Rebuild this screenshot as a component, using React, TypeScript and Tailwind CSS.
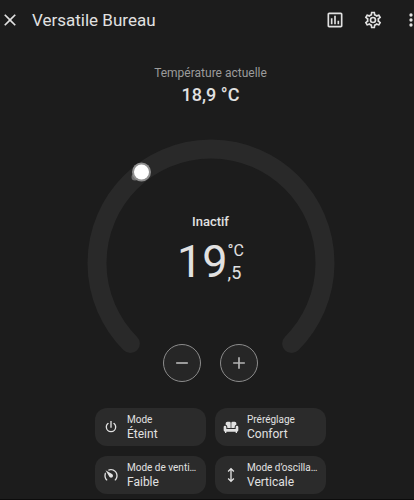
import type { ReactNode } from 'react';

const icons = {
  close: 'M19,6.41L17.59,5L12,10.59L6.41,5L5,6.41L10.59,12L5,17.59L6.41,19L12,13.41L17.59,19L19,17.59L13.41,12L19,6.41Z',
  chart: 'M9 17H7V10H9V17M13 17H11V7H13V17M17 17H15V13H17V17M19 19H5V5H19V19.1M19 3H5C3.9 3 3 3.9 3 5V19C3 20.1 3.9 21 5 21H19C20.1 21 21 20.1 21 19V5C21 3.9 20.1 3 19 3Z',
  cog: 'M12,8A4,4 0 0,1 16,12A4,4 0 0,1 12,16A4,4 0 0,1 8,12A4,4 0 0,1 12,8M12,10A2,2 0 0,0 10,12A2,2 0 0,0 12,14A2,2 0 0,0 14,12A2,2 0 0,0 12,10M10,22C9.75,22 9.54,21.82 9.5,21.58L9.13,18.93C8.5,18.68 7.96,18.34 7.44,17.94L4.95,18.95C4.73,19.03 4.46,18.95 4.34,18.73L2.34,15.27C2.21,15.05 2.27,14.78 2.46,14.63L4.57,12.97L4.5,12L4.57,11L2.46,9.37C2.27,9.22 2.21,8.95 2.34,8.73L4.34,5.27C4.46,5.05 4.73,4.96 4.95,5.05L7.44,6.05C7.96,5.66 8.5,5.32 9.13,5.07L9.5,2.42C9.54,2.18 9.75,2 10,2H14C14.25,2 14.46,2.18 14.5,2.42L14.87,5.07C15.5,5.32 16.04,5.66 16.56,6.05L19.05,5.05C19.27,4.96 19.54,5.05 19.66,5.27L21.66,8.73C21.79,8.95 21.73,9.22 21.54,9.37L19.43,11L19.5,12L19.43,13L21.54,14.63C21.73,14.78 21.79,15.05 21.66,15.27L19.66,18.73C19.54,18.95 19.27,19.04 19.05,18.95L16.56,17.95C16.04,18.34 15.5,18.68 14.87,18.93L14.5,21.58C14.46,21.82 14.25,22 14,22H10M11.25,4L10.88,6.61C9.68,6.86 8.62,7.5 7.85,8.39L5.44,7.35L4.69,8.65L6.8,10.2C6.4,11.37 6.4,12.64 6.8,13.8L4.68,15.36L5.43,16.66L7.86,15.62C8.63,16.5 9.68,17.14 10.87,17.38L11.24,20H12.76L13.13,17.39C14.32,17.14 15.37,16.5 16.14,15.62L18.57,16.66L19.32,15.36L17.2,13.81C17.6,12.64 17.6,11.37 17.2,10.2L19.31,8.65L18.56,7.35L16.15,8.39C15.38,7.5 14.32,6.86 13.12,6.62L12.75,4H11.25Z',
  dots: 'M12,16A2,2 0 0,1 14,18A2,2 0 0,1 12,20A2,2 0 0,1 10,18A2,2 0 0,1 12,16M12,10A2,2 0 0,1 14,12A2,2 0 0,1 12,14A2,2 0 0,1 10,12A2,2 0 0,1 12,10M12,4A2,2 0 0,1 14,6A2,2 0 0,1 12,8A2,2 0 0,1 10,6A2,2 0 0,1 12,4Z',
  minus: 'M19,13H5V11H19V13Z',
  plus: 'M19,13H13V19H11V13H5V11H11V5H13V11H19V13Z',
  power: 'M16.56,5.44L15.11,6.89C16.84,7.94 18,9.83 18,12A6,6 0 0,1 12,18A6,6 0 0,1 6,12C6,9.83 7.16,7.94 8.88,6.88L7.44,5.44C5.36,6.88 4,9.28 4,12A8,8 0 0,0 12,20A8,8 0 0,0 20,12C20,9.28 18.64,6.88 16.56,5.44M13,3H11V13H13',
  sofa: 'M6.5,4H9.5A2,2 0 0,1 11.5,6V13.5H6.5V12A3.5,3.5 0 0,0 4,8.7V6.5A2.5,2.5 0 0,1 6.5,4M14.5,4H17.5A2.5,2.5 0 0,1 20,6.5V8.7A3.5,3.5 0 0,0 17.5,12V13.5H12.5V6A2,2 0 0,1 14.5,4M3,10A2,2 0 0,1 5,12V15H19V12A2,2 0 0,1 23,12V17A2,2 0 0,1 21,19V21H19V19H5V21H3V19A2,2 0 0,1 1,17V12A2,2 0 0,1 3,10Z',
  speed: 'M12 16C13.66 16 15 14.66 15 13C15 11.88 14.39 10.9 13.5 10.39L3.79 4.77L9.32 14.35C9.82 15.33 10.83 16 12 16M12 3C10.19 3 8.5 3.5 7.03 4.32L9.13 5.53C10 5.19 11 5 12 5C16.42 5 20 8.58 20 13C20 15.21 19.11 17.21 17.66 18.65H17.65C17.26 19.04 17.26 19.67 17.65 20.06C18.04 20.45 18.68 20.45 19.07 20.07C20.88 18.26 22 15.76 22 13C22 7.5 17.5 3 12 3M2 13C2 15.76 3.12 18.26 4.93 20.07C5.32 20.45 5.95 20.45 6.34 20.06C6.73 19.67 6.73 19.04 6.34 18.65C4.89 17.2 4 15.21 4 13C4 12 4.19 11 4.54 10.1L3.33 8C2.5 9.5 2 11.18 2 13Z',
  vertical: 'M12,1L17,6L15.6,7.4L13,4.8V19.2L15.6,16.6L17,18L12,23L7,18L8.4,16.6L11,19.2V4.8L8.4,7.4L7,6Z'
};

type IconName = keyof typeof icons;

const modes: { icon: IconName; label: string; value: string }[] = [
  { icon: 'power', label: 'Mode', value: 'Éteint' },
  { icon: 'sofa', label: 'Préréglage', value: 'Confort' },
  { icon: 'speed', label: 'Mode de venti…', value: 'Faible' },
  { icon: 'vertical', label: 'Mode d’oscilla…', value: 'Verticale' }
];

function Icon({ name, className }: { name: IconName; className: string }) {
  return (
    <svg viewBox="0 0 24 24" fill="currentColor" className={className} aria-hidden="true">
      <path d={icons[name]} />
    </svg>
  );
}

function IconButton({ name, label }: { name: IconName; label: string }) {
  return (
    <button type="button" aria-label={label} className="flex size-[38px] items-center justify-center">
      <Icon name={name} className="size-5" />
    </button>
  );
}

function StepButton({ name, label }: { name: IconName; label: string }) {
  return (
    <button
      type="button"
      aria-label={label}
      className="flex size-[38px] items-center justify-center rounded-full border border-[#8c8c8c] bg-[#262626] text-[#b4b4b4]"
    >
      <Icon name={name} className="size-5" />
    </button>
  );
}

function Dial({ children }: { children: ReactNode }) {
  return (
    <div className="relative mt-[33px] h-[243px] w-[248px]">
      <svg viewBox="0 0 248 243" className="absolute inset-0 size-full" aria-hidden="true">
        <path d="M43.4 204.6A114 114 0 1 1 204.6 204.6" fill="none" stroke="#292929" strokeWidth="19" strokeLinecap="round" />
        <circle cx="48" cy="38" r="3.5" fill="#6f6f6f" />
        <circle cx="54.5" cy="33" r="9.5" fill="#8f8f8f" />
        <circle cx="54.5" cy="33" r="7.5" fill="#fff" />
      </svg>
      <div className="relative flex h-full flex-col items-center justify-between pt-[73px]">{children}</div>
    </div>
  );
}

export default function App() {
  return (
    <div className="min-h-screen overflow-hidden border-b border-[#0c0c0c] bg-[#1c1c1c] font-[Roboto,sans-serif] text-[#e1e1e1]">
      <div className="-mr-[7px]">
        <header className="-mr-[9px] flex h-10 items-center">
          <button type="button" aria-label="Fermer" className="flex h-[38px] w-5 items-center justify-center">
            <Icon name="close" className="size-5" />
          </button>
          <h1 className="ml-3 flex-1 text-[17px] leading-6">Versatile Bureau</h1>
          <IconButton name="chart" label="Historique" />
          <IconButton name="cog" label="Paramètres" />
          <IconButton name="dots" label="Plus" />
        </header>

        <main className="flex flex-col items-center pt-[25px] pb-1">
          <p className="text-xs leading-4 text-[#9b9b9b]">Température actuelle</p>
          <p className="mt-[3px] text-lg leading-[22px] font-medium">18,9 °C</p>

          <Dial>
            <div className="flex flex-col items-center">
              <p className="text-[13px] leading-5 font-medium">Inactif</p>
              <div className="mt-[6px] flex items-center">
                <span className="text-[45px] leading-[48px]">19</span>
                <span className="flex flex-col text-base leading-[22px]">
                  <span>°C</span>
                  <span className="text-lg leading-[22px]">,5</span>
                </span>
              </div>
            </div>
            <div className="flex gap-[19px]">
              <StepButton name="minus" label="Diminuer" />
              <StepButton name="plus" label="Augmenter" />
            </div>
          </Dial>

          <div className="mt-[26px] grid grid-cols-2 gap-x-[9px] gap-y-[10px]">
            {modes.map((mode) => (
              <button
                key={mode.label}
                type="button"
                className="flex h-[38px] w-[111px] items-center gap-2 rounded-xl bg-[#2b2b2b] px-2 text-left"
              >
                <Icon name={mode.icon} className="size-4 shrink-0" />
                <span className="min-w-0 flex-1 whitespace-nowrap">
                  <span className="block text-[10px] leading-[14px]">{mode.label}</span>
                  <span className="block text-xs leading-[14px]">{mode.value}</span>
                </span>
              </button>
            ))}
          </div>
        </main>
      </div>
    </div>
  );
}
